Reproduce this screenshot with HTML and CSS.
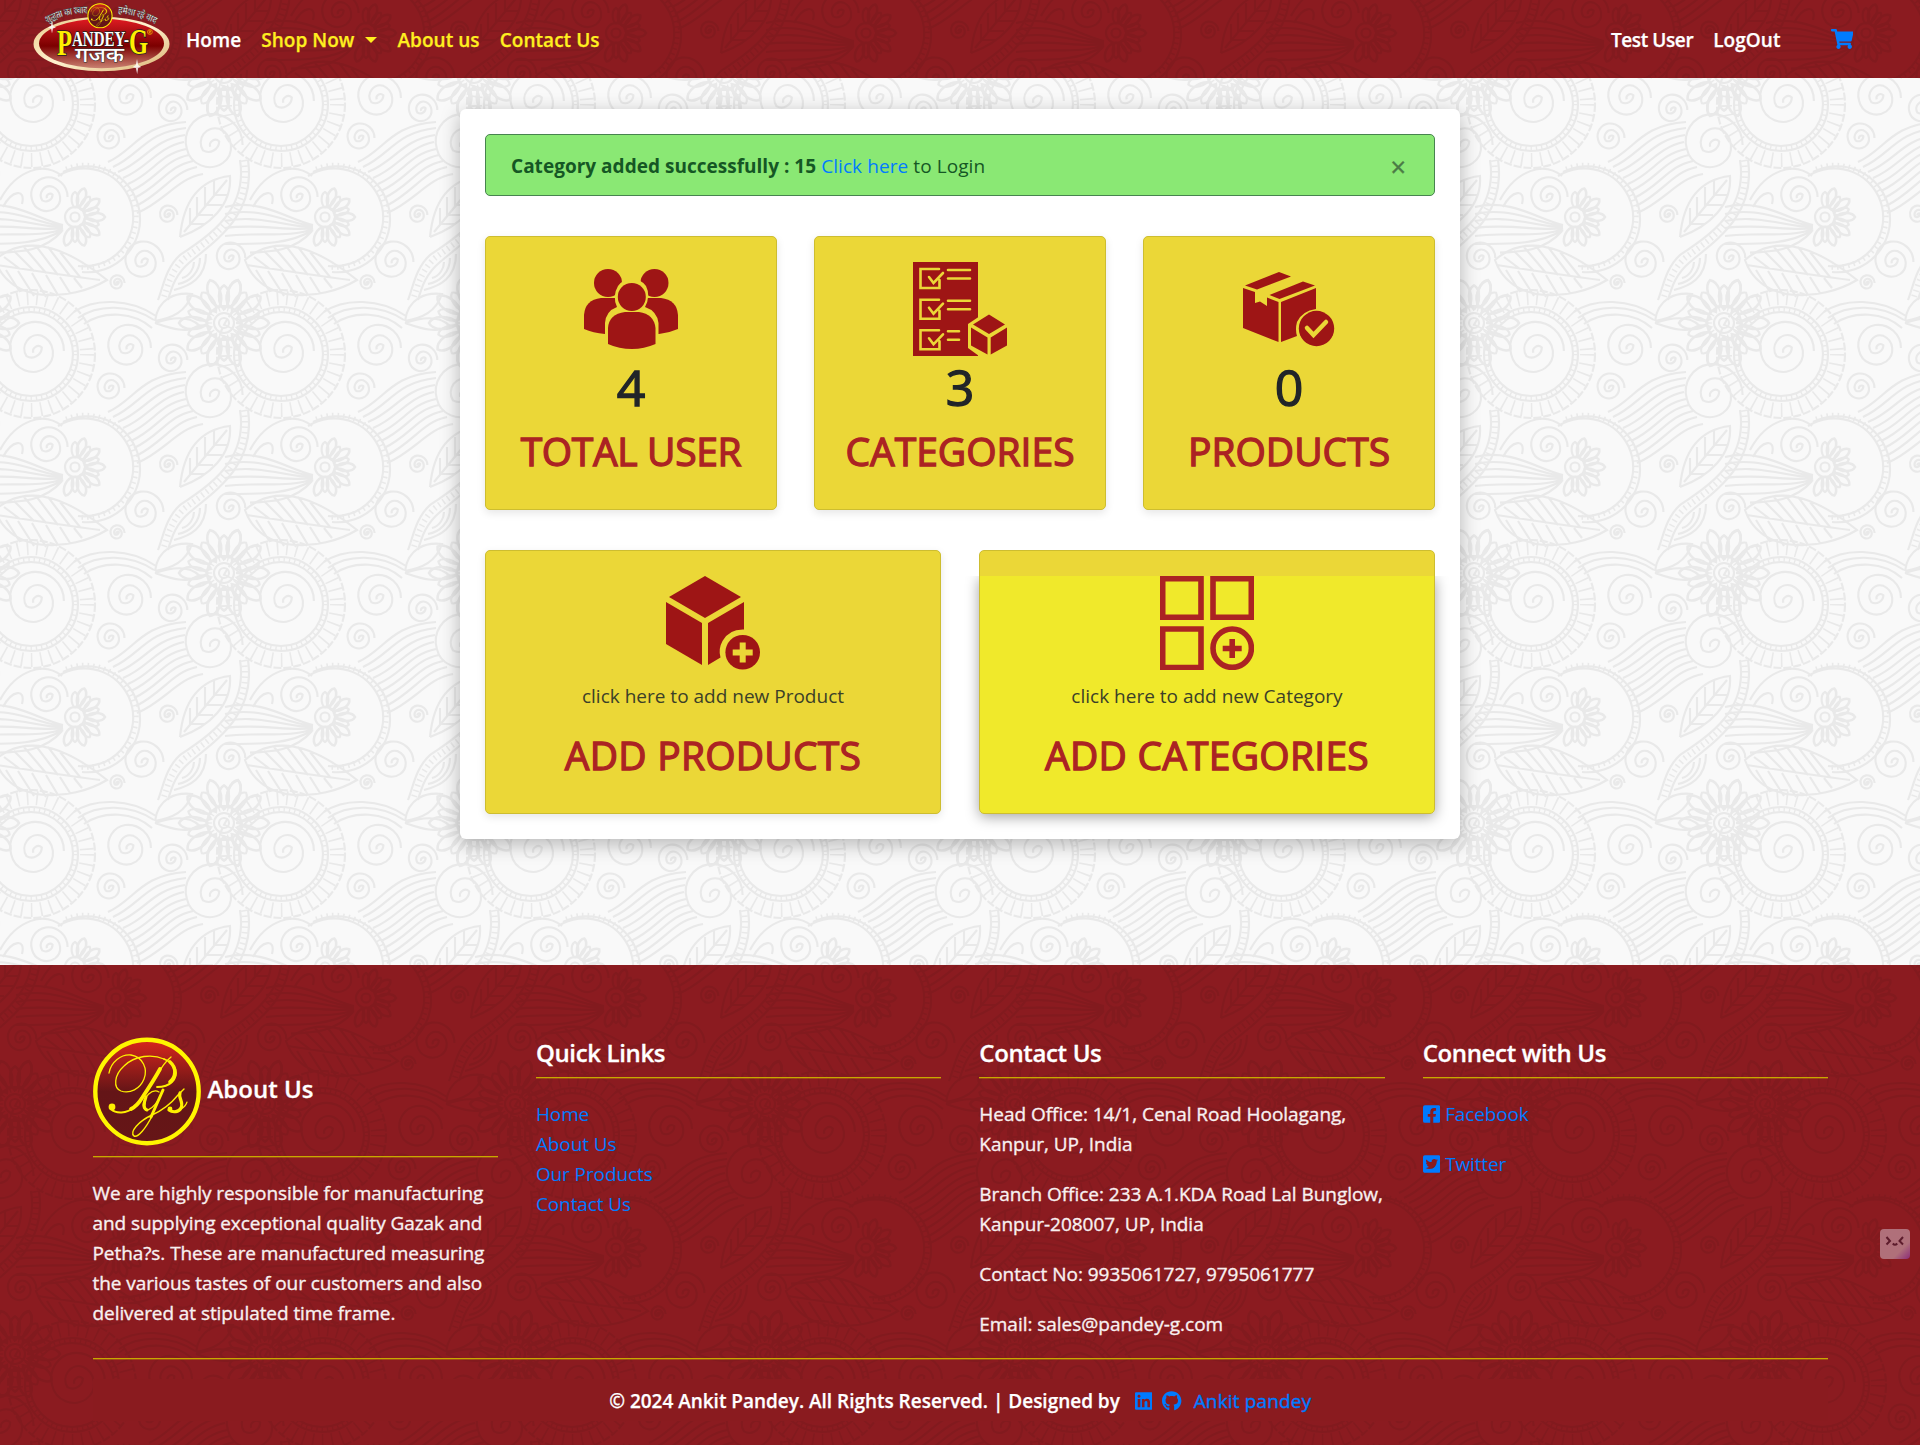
FILE: index.html
```html
<!DOCTYPE html>
<html lang="en">
<head>
<meta charset="utf-8">
<title>Pandey-G Admin</title>
<link rel="stylesheet" href="styles.css">
</head>
<body>
<svg width="0" height="0" class="defs" aria-hidden="true">
  <defs>
    <linearGradient id="oval" x1="0" y1="0" x2="0" y2="1"><stop offset="0" stop-color="#e01a22"/><stop offset=".3" stop-color="#a50d10"/><stop offset=".55" stop-color="#7c0000"/><stop offset="1" stop-color="#c98070"/></linearGradient>
    <linearGradient id="rim" x1="0" y1="0" x2="1" y2="1"><stop offset="0" stop-color="#e9c98a"/><stop offset=".5" stop-color="#fff3d0"/><stop offset="1" stop-color="#d9b070"/></linearGradient>
    <linearGradient id="seal" x1="0" y1="0" x2="0" y2="1"><stop offset="0" stop-color="#d9261c"/><stop offset=".5" stop-color="#641517"/><stop offset="1" stop-color="#661617"/></linearGradient>
    <symbol id="pgs" viewBox="0 0 108 109">
      <circle cx="54" cy="54.5" r="51.7" fill="url(#seal)" stroke="#fff600" stroke-width="4.4"/>
      <g fill="none" stroke="#fff000" stroke-linecap="round">
        <path stroke-width="1.3" d="M16 36C18 25 28 17 38 18C50 20 55 32 51 42C47 52 37 57 28 54C20 51 21 38 31 29C42 18 60 17 71 22"/>
        <path stroke-width="1.8" d="M71 22C84 27 86 38 79 45C75 49 70 50 64 50"/>
        <path stroke-width="3.6" d="M77 25C84 31 83 40 77 45"/>
        <path stroke-width="1.3" d="M78 20C72 25 68 31 65 37"/>
        <path stroke-width="3.8" d="M67 32C61 43 55 52 49 61C46 66 42 70 38 72"/>
        <path stroke-width="1.9" d="M42 70C33 77 23 77 18 72"/>
        <path stroke-width="1.3" d="M66 55C59 51 51 60 50 68C50 77 60 74 68 58"/>
        <path stroke-width="3" d="M53 60C50 68 51 72 54 73M70 53L58 80"/>
        <path stroke-width="1.4" d="M59 79C53 91 45 101 41 99C36 95 46 84 59 78C68 74 77 68 85 58L91 52"/>
        <path stroke-width="3.2" d="M87 56C85 61 91 65 88 71C86 75 80 76 76 73"/>
        <path stroke-width="1.2" d="M88 72Q93 69 94 65"/>
      </g>
      <circle cx="19" cy="70" r="3.4" fill="#fff000"/><circle cx="77" cy="72" r="2.4" fill="#fff000"/>
    </symbol>
  </defs>
</svg>

<nav class="navbar">
  <a class="brand" href="#" aria-label="Pandey-G">
    <svg width="140" height="76" viewBox="0 0 140 76">
      <ellipse cx="69.5" cy="43" rx="68" ry="27.2" fill="url(#rim)"/>
      <ellipse cx="69.5" cy="42.500" rx="62.5" ry="24.7" fill="url(#oval)"/>
      <path id="arcL" d="M15 22Q34 12 56 12" fill="none"/>
      <path id="arcR" d="M86 12Q106 14 124 23" fill="none"/>
      <text class="slogan"><textPath href="#arcL" textLength="42" lengthAdjust="spacingAndGlyphs">शुद्धता का स्वाद</textPath></text>
      <text class="slogan"><textPath href="#arcR" textLength="39" lengthAdjust="spacingAndGlyphs">हमेशा रहे याद</textPath></text>
      <text class="wordmark" x="25" y="53.500" textLength="91" lengthAdjust="spacingAndGlyphs"><tspan class="big">P</tspan><tspan dy="-9">ANDEY-</tspan><tspan class="big" dy="8">G</tspan></text>
      <path class="reg" d="M115.500 31a2.400 2.400 0 1 0 4.800 0a2.400 2.400 0 1 0-4.800 0M117.300 32.500v-2.800h1.200v1.300h-1l1.200 1.500"/>
      <text class="hindi" x="43" y="60.500" textLength="49" lengthAdjust="spacingAndGlyphs">गजक</text>
      <use href="#pgs" x="55" y="2" width="26" height="25.500"/>
      <path d="M105 58l1.200 6 3 2-3 1-1 6-1.400-6-3-1 3-2zM20 19l1 6 3 1.500-3 1-1 5-1-5-3-1 3-1.500z" fill="#fff" opacity=".8"/>
    </svg>
  </a>
  <div class="nav-links">
    <a class="white" href="#">Home</a>
    <a class="drop" href="#"><span>Shop Now</span><i class="caret"></i></a>
    <a href="#">About us</a>
    <a href="#">Contact Us</a>
  </div>
  <div class="nav-links nav-right">
    <a class="white user" href="#">Test User</a>
    <a class="white logout" href="#">LogOut</a>
    <a class="cart" href="#" aria-label="Cart"><svg width="22.500" height="20" viewBox="0 0 576 512"><path d="M528.12 301.319l47.273-208C578.806 78.301 567.391 64 551.990 64H159.208l-9.166-44.810C147.758 8.021 137.930 0 126.529 0H24C10.745 0 0 10.745 0 24v16c0 13.255 10.745 24 24 24h69.883l70.248 343.435C147.325 417.100 136 435.222 136 456c0 30.928 25.072 56 56 56s56-25.072 56-56c0-15.674-6.447-29.835-16.824-40h209.647C430.447 426.165 424 440.326 424 456c0 30.928 25.072 56 56 56s56-25.072 56-56c0-22.172-12.888-41.332-31.579-50.405l5.517-24.276c3.413-15.018-8.002-29.319-23.403-29.319H218.117l-6.545-32h293.145c11.206 0 20.920-7.754 23.403-18.681z"/></svg></a>
  </div>
</nav>

<main class="page">
  <section class="panel">
    <div class="alert">
      <p><strong>Category added successfully : 15</strong> <a href="#">Click here</a> to Login</p>
      <button class="close" aria-label="Close">×</button>
    </div>

    <div class="row three">
      <article class="card">
        <svg class="icon" viewBox="0 0 94 94">
          <ellipse cx="24" cy="21" rx="14" ry="14"/><ellipse cx="70.500" cy="21" rx="14" ry="14"/>
          <path d="M0 67V53Q1 38 17 36H77Q93 38 94 53V67Q85 71 75 72H21Q9 71 0 67Z"/>
          <path class="gap" d="M21 74V61Q22 49 33 45Q28 34 34 24Q39 17 47.500 16.500Q57 17 62 24Q67 34 61 45Q73 49 74.500 61V74V82H21Z"/>
          <ellipse cx="47.800" cy="35" rx="14" ry="14"/>
          <path d="M24 82V66Q25 52 41 50H55Q70 52 71.500 66V82Q60 87 48 87Q35 87 24 82Z"/>
        </svg>
        <p class="count">4</p>
        <h2 class="w-total">TOTAL USER</h2>
      </article>
      <article class="card">
        <svg class="icon" viewBox="0 0 94 94">
          <path d="M0 0H65V94H0Z"/>
          <g class="line">
            <path d="M26 7H7.500V26H26.500V18M16 15l4.500 6L30 11M35 8H57M35 16.500H57"/>
            <path d="M26 37.700H7.500V56.700H26.500V48.700M16 45.700l4.500 6L30 41.700M35 38.700H57M35 47.200H57"/>
            <path d="M26 68.300H7.500V87.300H26.500V79.300M16 76.300l4.500 6L30 72.300M35 69.300H46M35 77.800H46"/>
          </g>
          <path class="gap" d="M55 62L76 48L96 61V94H66L55 86Z"/>
          <path d="M60 62.500L76 52.500L92 62.500L76 72ZM58 65.500L74.500 75.500V92.500L58 83.500ZM94 65.500L77.700 75.500V92.500L94 83.500Z"/>
        </svg>
        <p class="count">3</p>
        <h2>CATEGORIES</h2>
      </article>
      <article class="card">
        <svg class="icon" viewBox="0 0 94 94">
          <path d="M3 23.500L37 10L49 14.500L15 27.500Z"/>
          <path d="M27.500 33L61 19.500L73 23.500L37.500 37Z"/>
          <path d="M1 26L13 30V41L18 39.500L25 44V35.500L36.500 40V80L1 66Z"/>
          <path d="M39 40L74 26V47Q60 49 55 60Q53 67 55 74L39 80Z"/>
          <circle cx="74.500" cy="66.500" r="17.700"/>
          <path class="check" d="M65 66l6.500 7L84 60"/>
        </svg>
        <p class="count">0</p>
        <h2 class="w-prod">PRODUCTS</h2>
      </article>
    </div>

    <div class="row two">
      <article class="card">
        <svg class="icon" viewBox="0 0 94 94">
          <path d="M39 0L75 21L39 42L3 21Z"/>
          <path d="M0 26L36 47V89L0 68Z"/>
          <path d="M42 47L78 26V53.500Q63 53 56.500 65Q52 73 54.500 81.500L42 89Z"/>
          <circle cx="76.700" cy="76.300" r="17.300"/>
          <path class="plus" d="M76.700 66.500V86.500M66.700 76.500H86.700"/>
        </svg>
        <p class="hint">click here to add new Product</p>
        <h2>ADD PRODUCTS</h2>
      </article>
      <article class="card hovered">
        <svg class="icon outline" viewBox="0 0 94 94">
          <path d="M2.700 2.700H41V41.300H2.700ZM53 2.700H91.300V41.300H53ZM2.700 53H41V91.500H2.700Z"/>
          <circle cx="72.200" cy="72.200" r="19.200"/>
          <path d="M72.200 63V82M62.700 72.500H81.700"/>
        </svg>
        <p class="hint">click here to add new Category</p>
        <h2>ADD CATEGORIES</h2>
      </article>
    </div>
  </section>
</main>

<footer class="footer">
  <div class="columns">
    <section>
      <div class="about-head"><svg width="108" height="109"><use href="#pgs"/></svg><h3>About Us</h3></div>
      <p class="about">We are highly responsible for manufacturing<br>and supplying exceptional quality Gazak and<br>Petha?s. These are manufactured measuring<br>the various tastes of our customers and also<br>delivered at stipulated time frame.</p>
    </section>
    <section>
      <h3 class="ruled">Quick Links</h3>
      <ul>
        <li><a href="#">Home</a></li>
        <li><a href="#">About Us</a></li>
        <li><a href="#">Our Products</a></li>
        <li><a href="#">Contact Us</a></li>
      </ul>
    </section>
    <section>
      <h3 class="ruled">Contact Us</h3>
      <p>Head Office: 14/1, Cenal Road Hoolagang,<br>Kanpur, UP, India</p>
      <p>Branch Office: 233 A.1.KDA Road Lal Bunglow,<br>Kanpur-208007, UP, India</p>
      <p>Contact No: 9935061727, 9795061777</p>
      <p>Email: sales@pandey-g.com</p>
    </section>
    <section>
      <h3 class="ruled">Connect with Us</h3>
      <p><a class="social" href="#"><svg width="17.500" height="20" viewBox="0 0 448 512"><path d="M400 32H48A48 48 0 0 0 0 80v352a48 48 0 0 0 48 48h137.250V327.690h-63V256h63v-54.640c0-62.150 37-96.480 93.670-96.480 27.140 0 55.520 4.840 55.520 4.840v61h-31.270c-30.810 0-40.420 19.120-40.420 38.730V256h68.780l-11 71.690h-57.780V480H400a48 48 0 0 0 48-48V80a48 48 0 0 0-48-48z"/></svg>Facebook</a></p>
      <p><a class="social" href="#"><svg width="17.500" height="20" viewBox="0 0 448 512"><path d="M400 32H48C21.500 32 0 53.500 0 80v352c0 26.500 21.500 48 48 48h352c26.500 0 48-21.500 48-48V80c0-26.500-21.500-48-48-48zm-48.900 158.800c.2 2.800.2 5.700.2 8.500 0 86.700-66 186.600-186.600 186.600-37.200 0-71.700-10.800-100.700-29.400 5.300.6 10.400.8 15.800.8 30.700 0 58.900-10.400 81.400-28-28.800-.6-53-19.500-61.300-45.500 10.100 1.500 19.200 1.500 29.600-1.200-30-6.100-52.500-32.500-52.500-64.400v-.8c8.700 4.900 18.900 7.900 29.600 8.300a65.447 65.447 0 0 1-29.200-54.600c0-12.200 3.200-23.400 8.900-33.100 32.300 39.800 80.800 65.800 135.200 68.600-9.300-44.500 24-80.600 64-80.600 18.900 0 35.900 7.900 47.900 20.700 14.800-2.800 29-8.300 41.600-15.800-4.900 15.200-15.200 28-28.800 36.100 13.200-1.400 26-5.100 37.800-10.200-8.900 13.100-20.100 24.700-32.900 34z"/></svg>Twitter</a></p>
    </section>
  </div>
  <div class="copyright">
    <strong>© 2024 Ankit Pandey. All Rights Reserved. | Designed by</strong>
    <a class="li" href="#" aria-label="LinkedIn"><svg width="17.500" height="20" viewBox="0 0 448 512"><path d="M416 32H31.900C14.300 32 0 46.500 0 64.300v383.400C0 465.500 14.300 480 31.900 480H416c17.600 0 32-14.500 32-32.300V64.300c0-17.800-14.400-32.300-32-32.300zM135.400 416H69V202.200h66.500V416zm-33.200-243c-21.300 0-38.500-17.300-38.500-38.500S80.900 96 102.200 96c21.200 0 38.500 17.300 38.500 38.500 0 21.300-17.200 38.500-38.500 38.500zm282.100 243h-66.400V312c0-24.800-.5-56.700-34.500-56.700-34.600 0-39.900 27-39.900 54.900V416h-66.400V202.200h63.700v29.200h.9c8.900-16.800 30.600-34.500 62.900-34.500 67.200 0 79.700 44.300 79.700 101.900V416z"/></svg></a>
    <a class="gh" href="#" aria-label="GitHub"><svg width="19.400" height="20" viewBox="0 0 496 512"><path d="M165.900 397.400c0 2-2.300 3.600-5.200 3.600-3.300.3-5.600-1.300-5.600-3.600 0-2 2.300-3.600 5.200-3.600 3-.3 5.600 1.300 5.600 3.600zM244.800 8C106.100 8 0 113.300 0 252c0 110.900 69.800 205.800 169.500 239.200 12.800 2.300 17.300-5.600 17.300-12.100 0-6.200-.3-40.400-.3-61.400 0 0-70 15-84.700-29.800 0 0-11.400-29.100-27.800-36.600 0 0-22.900-15.700 1.600-15.400 0 0 24.900 2 38.600 25.800 21.900 38.600 58.600 27.500 72.900 20.900 2.300-16 8.800-27.100 16-33.700-55.900-6.200-112.300-14.300-112.300-110.500 0-27.500 7.600-41.300 23.600-58.900-2.600-6.500-11.100-33.300 2.600-67.900 20.900-6.500 69 27 69 27 20-5.600 41.500-8.500 62.800-8.500s42.800 2.900 62.800 8.500c0 0 48.100-33.600 69-27 13.700 34.700 5.200 61.400 2.600 67.900 16 17.700 25.800 31.500 25.800 58.900 0 96.500-58.900 104.200-114.800 110.500 9.200 7.900 17 22.900 17 46.400 0 33.700-.3 75.400-.3 83.600 0 6.500 4.600 14.400 17.300 12.100C428.200 457.800 496 362.900 496 252 496 113.300 383.500 8 244.800 8z"/></svg></a>
    <a class="author" href="#">Ankit pandey</a>
  </div>
  <button class="widget" aria-label="Assistant"><svg width="30" height="30" viewBox="0 0 30 30"><path d="M6.500 8l3.500 4-3.500 3.500M23 8l-3.500 4 3.500 3.500M12.800 14.500q2.200 2.500 4.400 0"/></svg></button>
</footer>
</body>
</html>
```
FILE: styles.css
```css
:root {
  --paisley: url("data:image/svg+xml,<svg xmlns='http://www.w3.org/2000/svg' width='250' height='250'><defs><path id='s' vector-effect='non-scaling-stroke' d='M-1 1a3 3 0 0 1 5-3a6 6 0 0 1-9 5a8 8 0 0 1 9-12a11 11 0 0 1 2 19a13 13 0 0 1-20-8a15 15 0 0 1 12-19a17 17 0 0 1 19 17'/><path id='p' d='M0-9C-5-14-4-23 0-25C4-23 5-14 0-9'/><g id='f'><use href='%23p'/><use href='%23p' transform='rotate(36)'/><use href='%23p' transform='rotate(72)'/><use href='%23p' transform='rotate(108)'/><use href='%23p' transform='rotate(144)'/><use href='%23p' transform='rotate(180)'/></g><g id='t' fill='none' stroke='%23e9e9e9' stroke-width='2.100'><circle cx='75' cy='217' r='4.500'/><circle cx='75' cy='217' r='10'/><use href='%23f' transform='translate(75 217)'/><use href='%23f' transform='translate(75 217) rotate(18) scale(1.200)'/><path d='M58 176A49 49 0 1 1 78 266M63 172A53 53 0 1 1 82 272'/><path stroke-width='5' stroke-dasharray='1.500 4' d='M66 169A51 51 0 1 1 80 267'/><use href='%23s' transform='translate(48 197) scale(1.150)'/><path d='M0 200C16 170 44 161 62 176M3 207C12 190 26 188 22 204'/><use href='%23s' transform='translate(35 101) scale(1.700)'/><circle cx='31' cy='104' r='42'/><circle cx='31' cy='104' r='47'/><circle cx='31' cy='104' r='44.500' stroke-width='4' stroke-dasharray='1.300 4'/><circle cx='31' cy='104' r='56' stroke-width='14' stroke-dasharray='1.600 8'/><circle cx='31' cy='104' r='64' stroke-dasharray='8 2'/><use href='%23s' transform='translate(128 98) scale(1.350)'/><path d='M74 62C94 48 130 48 156 66M78 68C98 54 130 54 154 70M84 74C104 60 134 62 152 78'/><use href='%23s' transform='translate(172 110) scale(.900)'/><use href='%23s' transform='translate(110 138) scale(.850)'/><use href='%23s' transform='translate(212 145) scale(1.800)'/><use href='%23s' transform='translate(143 12) scale(1.200)'/><use href='%23s' transform='translate(230 8) scale(.900)'/><use href='%23s' transform='translate(168 215) scale(.550)'/><use href='%23s' transform='translate(117 33) scale(.450)'/><circle cx='224' cy='73' r='5'/><circle cx='224' cy='73' r='10'/><circle cx='224' cy='73' r='14' stroke-width='4' stroke-dasharray='1.300 3'/><circle cx='224' cy='73' r='17'/><g stroke-width='1.400' transform='translate(224 73) scale(1.500)'><use href='%23f'/><use href='%23f' transform='rotate(180)'/><use href='%23f' transform='rotate(18) scale(1.200)'/><use href='%23f' transform='rotate(198) scale(1.200)'/></g><path d='M-5 10C20-12 55-12 107 30C70 52 10 54-5 10ZM-3 15C30 20 70 26 100 30M4 7l16 12M14 1l20 20M24-3l22 26M36-4l22 29M48-3l22 29M60 2l20 25M6 20l14 22M18 21l16 25M32 23l14 24M46 25l12 20M60 27l10 16M74 28l8 10'/><path d='M63 225C40 220 10 198-25 207M63 226C40 224 10 206-25 214M63 227C40 228 10 214-25 221M63 228C40 232 10 223-25 228M63 229C40 238 10 232-25 236M63 230C40 244 15 244-25 244M62 231C44 252 20 252-10 253'/><path d='M108 162C135 150 140 125 186 122M113 167C140 155 146 132 186 128M118 172C144 162 152 140 185 135M123 178C148 168 156 148 184 142M128 184C152 174 160 154 186 149M131 191C156 180 164 160 189 155M134 198C160 186 168 166 193 161M136 206C164 192 172 172 197 167M137 213C164 202 178 178 203 174'/><path d='M180 237C183 205 196 180 230 176C232 205 210 226 180 237M184 232L227 180M190 224v-16M197 216v-19M205 207v-20M214 196v-16M190 224h14M198 215h15M206 205h16M214 195h13'/><path d='M240 160C248 210 210 235 180 255C166 268 164 284 158 300M248 160C256 215 216 240 190 262C176 274 172 286 168 300'/><path stroke-width='6' stroke-dasharray='1.500 4' d='M244 160C252 213 213 237 185 258C171 271 168 285 163 300'/><path d='M155 71C158 48 176 42 192 44C186 62 172 68 155 71M155 73C175 66 190 66 200 76C186 84 170 78 155 73M174 40C190 36 206 28 206 4M178 34C190 32 200 22 200 8M182 28C190 26 194 18 194 12'/></g></defs><rect width='250' height='250' fill='%23f9f9f9'/><use href='%23t'/><use href='%23t' x='-250'/><use href='%23t' x='250'/><use href='%23t' y='-250'/><use href='%23t' y='250'/></svg>");
  --red: #8e1c21;
  --blue: #007bff;
  --rule: #c8a800;
  --rule-soft: rgba(200, 168, 0, .35);
}

* { box-sizing: border-box; }

body {
  margin: 0;
  font: 400 19px/30px "Open Sans", "Noto Sans", sans-serif;
  color: #212529;
  background: #fff;
}
h2, h3, p, ul { margin: 0; padding: 0; }
ul { list-style: none; }
a { color: var(--blue); text-decoration: none; }
button { border: 0; background: none; padding: 0; }
svg { display: block; fill: currentColor; }
.defs { position: absolute; }

/* navigation */
.navbar {
  display: flex;
  align-items: center;
  height: 78px;
  padding: 0 67px 0 32px;
  background: var(--paisley) 41px 66px, var(--red);
  background-blend-mode: multiply;
}
.brand { width: 154px; height: 76px; }
.brand svg { overflow: visible; }
.slogan { font: 700 10px "Noto Sans", sans-serif; fill: #fff; stroke: #222; stroke-width: .4px; }
.wordmark { font: 700 22px "Liberation Serif", serif; fill: #fff; stroke: #222; stroke-width: 1.6px; paint-order: stroke; }
.wordmark .big { font-size: 36px; fill: #ffee00; }
.reg { fill: none; stroke: #e9a400; stroke-width: .8px; }
.hindi { font: 500 21px "Noto Sans", sans-serif; fill: #fff; stroke: #333; stroke-width: 1px; paint-order: stroke; }
.nav-links { display: flex; align-items: center; gap: 20px; padding-top: 2px; font-weight: 600; letter-spacing: .05px; -webkit-text-stroke: .25px; }
.nav-links a { color: #ffef1f; }
.nav-links a.white { color: #fff; }
.nav-links a.cart { color: var(--blue); margin: -2px 0 0 30px; }
.nav-right { margin-left: auto; }
.nav-links .user { letter-spacing: -.4px; }
.drop { display: flex; align-items: center; gap: 11px; }
.caret { border: 6px solid transparent; border-top-color: currentColor; border-bottom: 0; }

/* dashboard */
.page {
  height: 887px;
  padding-top: 31px;
  background: var(--paisley) 0 -78px;
}
.panel {
  width: 1000px;
  height: 730px;
  margin: 0 auto;
  padding: 25px;
  border-radius: 6px;
  background: #fff;
  box-shadow: 0 5px 20px rgba(0, 0, 0, .28);
}
.alert {
  display: flex;
  align-items: center;
  justify-content: space-between;
  height: 62px;
  padding: 2px 28px 0 25px;
  border: 1px solid #47834f;
  border-radius: 5px;
  background: #8ae874;
  color: #155724;
  letter-spacing: .08px;
}
.alert strong { font-weight: 700; letter-spacing: .02px; }
.close { padding-top: 2px; font: 400 27px/30px "Open Sans", sans-serif; color: #4a7a45; -webkit-text-stroke: .4px; }
.row { display: grid; margin-top: 40px; }
.three { grid-template-columns: repeat(3, 292px); justify-content: space-between; }
.two { grid-template-columns: repeat(2, 456px); justify-content: space-between; }
.card {
  position: relative;
  display: flex;
  flex-direction: column;
  align-items: center;
  height: 274px;
  padding-top: 25px;
  border: 1px solid #cdbd30;
  border-radius: 5px;
  background: #ebd737;
  box-shadow: 0 3px 8px rgba(0, 0, 0, .1);
}
.two .card { height: 264px; }
.icon { width: 94px; height: 94px; color: #9e1515; }
.icon .gap { fill: #ebd737; }
.icon .line { fill: none; stroke: #ebd737; stroke-width: 2.6; stroke-linecap: round; }
.icon .check { fill: none; stroke: #ebd737; stroke-width: 4.5; stroke-linecap: round; }
.icon .plus { stroke: #ebd737; stroke-width: 6; }
.icon.outline { fill: none; stroke: #ab2323; stroke-width: 5.6; }
.count { margin-top: 1px; font-size: 50px; line-height: 60px; -webkit-text-stroke: 1.3px; }
.card h2 { margin-top: 10px; font-size: 39px; line-height: 48px; font-weight: 400; color: #ab2323; white-space: nowrap; -webkit-text-stroke: 1.3px; }
.card h2.w-total { letter-spacing: -.35px; }
.hint { margin-top: 11px; color: #3c4028; }
.two .card h2 { margin-top: 20px; letter-spacing: .25px; }
.hovered { background: linear-gradient(#ebd737 25px, #f0e92b 25px); isolation: isolate; box-shadow: none; }
.hovered::before {
  content: "";
  position: absolute;
  inset: 25px -1px -1px;
  z-index: -1;
  border-radius: 0 0 5px 5px;
  box-shadow: 0 3px 14px rgba(0, 0, 0, .36);
  clip-path: inset(0 -40px -40px);
}

/* footer */
.footer {
  position: relative;
  height: 480px;
  padding: 72px 92px 0 92.5px;
  background: var(--paisley) 41px 66px, var(--red);
  background-blend-mode: multiply;
  color: #f8f0f0;
}
.columns {
  display: grid;
  grid-template-columns: repeat(4, 405.300px);
  justify-content: space-between;
  height: 322px;
  border-bottom: 1px solid var(--rule);
  box-shadow: 0 1px var(--rule-soft);
  white-space: nowrap;
}
.footer h3 { font-size: 24px; line-height: 32px; font-weight: 600; letter-spacing: -.35px; color: #fff; -webkit-text-stroke: .3px; }
.about-head {
  display: flex;
  align-items: center;
  gap: 7px;
  height: 120px;
  padding-bottom: 10px;
  margin-bottom: 21px;
  border-bottom: 1px solid var(--rule);
  box-shadow: 0 1px var(--rule-soft);
}
.footer .about-head h3 { margin-top: -6px; letter-spacing: 0; }
.ruled { height: 41px; margin-bottom: 21px; border-bottom: 1px solid var(--rule); box-shadow: 0 1px var(--rule-soft); }
.columns p { margin-bottom: 20px; letter-spacing: -.03px; -webkit-text-stroke: .35px; }
.columns p.about { letter-spacing: -.07px; }
.columns li { letter-spacing: -.1px; }
.columns p .social { display: flex; align-items: center; gap: 5px; letter-spacing: -.15px; -webkit-text-stroke: 0; }
.copyright {
  display: flex;
  align-items: center;
  justify-content: center;
  height: 42px;
  margin-top: 20px;
  padding-top: 1px;
  background: #8a1b1f;
  color: #fff;
  white-space: nowrap;
}
.copyright strong { font-weight: 600; letter-spacing: -.02px; -webkit-text-stroke: .25px; }
.li { margin-left: 15px; }
.gh { margin-left: 10px; }
.author { margin-left: 12px; letter-spacing: .15px; -webkit-text-stroke: .4px; }
.widget {
  position: absolute;
  right: 10px;
  top: 264px;
  width: 30px;
  height: 30px;
  border-radius: 4px;
  background: linear-gradient(135deg, #b0707a 70%, #8c2c78);
}
.widget path { fill: none; stroke: #5d1c2c; stroke-width: 2; }
```
